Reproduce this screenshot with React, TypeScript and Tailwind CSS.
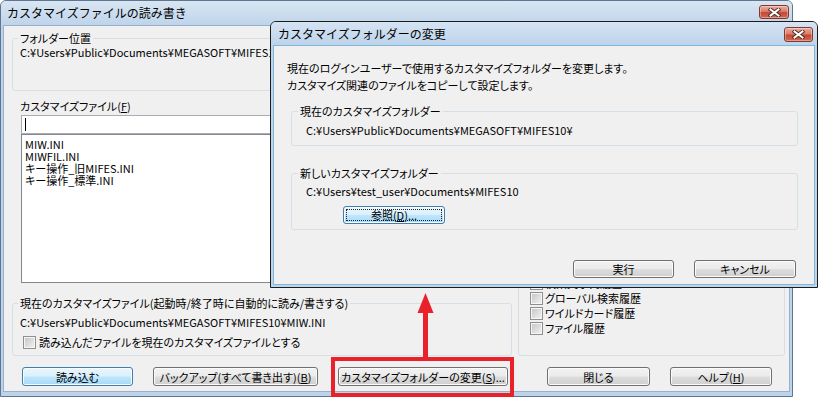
import React from "react";

const GRAY_BTN =
  "border-[#707070] bg-[linear-gradient(to_bottom,#f2f2f2_0%,#ebebeb_48%,#dddddd_52%,#cfcfcf_100%)]";
const BLUE_BTN =
  "border-[#3c7fb1] bg-[linear-gradient(to_bottom,#eaf6fd_0%,#d9f0fc_48%,#bee6fd_52%,#a7d9f5_100%)]";

function CloseButton({ className = "" }: { className?: string }) {
  return (
    <div
      className={`flex items-center justify-center rounded-[3px] border border-[#83382d] bg-[linear-gradient(to_bottom,#eaada0_0%,#d97d6c_45%,#c44733_55%,#cf6a55_100%)] shadow-[inset_0_0_0_1px_rgba(255,255,255,0.35)] ${className}`}
    >
      <svg width="13" height="9" viewBox="0 0 13 9">
        <path d="M2.5 1.5 L10.5 7.5 M10.5 1.5 L2.5 7.5" stroke="#4b2620" strokeWidth="3.8" strokeLinecap="square" />
        <path d="M2.5 1.5 L10.5 7.5 M10.5 1.5 L2.5 7.5" stroke="#ffffff" strokeWidth="2" strokeLinecap="square" />
      </svg>
    </div>
  );
}

function Btn({
  className = "",
  primary = false,
  focus = false,
  children,
}: {
  className?: string;
  primary?: boolean;
  focus?: boolean;
  children: React.ReactNode;
}) {
  return (
    <div
      className={`flex shrink-0 items-center justify-center whitespace-nowrap rounded-[3px] border shadow-[inset_0_0_0_1px_#fbfbfb] ${
        primary ? BLUE_BTN : GRAY_BTN
      } ${className}`}
    >
      {focus ? (
        <div className="m-[2px] flex h-[calc(100%-4px)] w-full items-center justify-center border border-dotted border-[#222]">
          {children}
        </div>
      ) : (
        children
      )}
    </div>
  );
}

function Check() {
  return (
    <span className="inline-block h-[13px] w-[13px] shrink-0 border border-[#8f8f8f] bg-[linear-gradient(135deg,#c4c4c4_0%,#f3f3f3_100%)] shadow-[inset_0_0_0_1px_#f6f6f6]" />
  );
}

function Group({
  label,
  className = "",
  children,
}: {
  label: React.ReactNode;
  className?: string;
  children?: React.ReactNode;
}) {
  return (
    <fieldset className={`rounded-[3px] border border-[#d5dfe5] ${className}`}>
      <legend className="-ml-[2px] whitespace-nowrap px-[2px] leading-[14px]">{label}</legend>
      {children}
    </fieldset>
  );
}

const U = ({ children }: { children: React.ReactNode }) => (
  <span className="underline underline-offset-[1px]">{children}</span>
);

export default function App() {
  return (
    <div className="relative h-[397px] w-[819px] overflow-hidden bg-white font-['Noto_Sans_CJK_JP','Noto_Sans_CJK_SC',sans-serif] text-[11px] leading-[14px] text-black [font-feature-settings:'palt']">
      {/* main window */}
      <div className="flex h-[397px] w-[793px] flex-col rounded-t-[6px] border border-[#5f7590] bg-[#bed3ea]">
        <div className="flex h-[24px] shrink-0 items-start justify-between rounded-t-[5px] bg-[linear-gradient(to_bottom,#d9e6f3,#bfd4ea)]">
          <span className="mt-[5px] pl-[6px] text-[12px] [font-feature-settings:normal]">カスタマイズファイルの読み書き</span>
          <CloseButton className="mr-[3px] mt-[4px] h-[14px] w-[30px]" />
        </div>
        <div className="mx-[2px] mb-[4px] flex flex-1 flex-col border border-[#97b0cc] bg-[#f0f0f0] pt-[5px]">
          <Group label="フォルダー位置" className="ml-[8px] w-[771px] pb-[31px] pl-[7px]">
            <div className="whitespace-nowrap">C:¥Users¥Public¥Documents¥MEGASOFT¥MIFES10¥</div>
          </Group>

          <div className="flex">
            <div className="ml-[8px] flex w-[500px] flex-col">
              <div className="mt-[8px] pl-[8px]">
                カスタマイズファイル(<U>F</U>)
              </div>
              <div className="ml-[9px] mt-[2px] flex h-[19px] w-[484px] items-center border border-[#abadb3] bg-white pl-[3px]">
                <div className="h-[13px] w-[1px] bg-black" />
              </div>
              <div className="ml-[9px] flex h-[149px] w-[484px] flex-col border border-[#828790] bg-white pl-[3px] pt-[3px] leading-[12px]">
                <div>MIW.INI</div>
                <div>MIWFIL.INI</div>
                <div>キー操作_旧MIFES.INI</div>
                <div>キー操作_標準.INI</div>
              </div>
              <Group
                label="現在のカスタマイズファイル(起動時/終了時に自動的に読み/書きする)"
                className="mt-[13px] w-[500px] pb-[6px] pl-[7px]"
              >
                <div className="mt-[5px] whitespace-nowrap">C:¥Users¥Public¥Documents¥MEGASOFT¥MIFES10¥MIW.INI</div>
                <div className="mt-[6px] flex items-center gap-[3px] pl-[3px]">
                  <Check />
                  <span>読み込んだファイルを現在のカスタマイズファイルとする</span>
                </div>
              </Group>
            </div>

            <Group label="履歴" className="ml-[6px] mt-[8px] flex w-[267px] flex-col justify-end pb-[19px] pl-[11px]">
              <div className="mt-auto flex flex-col leading-[15px]">
                <div className="flex h-[15px] items-center gap-[2px]">
                  <Check />
                  <span>検索文字列履歴</span>
                </div>
                <div className="flex h-[15px] items-center gap-[2px]">
                  <Check />
                  <span>グローバル検索履歴</span>
                </div>
                <div className="flex h-[15px] items-center gap-[2px]">
                  <Check />
                  <span>ワイルドカード履歴</span>
                </div>
                <div className="flex h-[15px] items-center gap-[2px]">
                  <Check />
                  <span>ファイル履歴</span>
                </div>
              </div>
            </Group>
          </div>

          <div className="ml-[18px] mt-[11px] flex">
            <Btn primary className="h-[19px] w-[111px]">読み込む</Btn>
            <Btn className="ml-[20px] h-[19px] w-[165px]">
              バックアップ(すべて書き出す)(<U>B</U>)
            </Btn>
            <Btn className="ml-[20px] h-[19px] w-[170px]">
              カスタマイズフォルダーの変更(<U>S</U>)...
            </Btn>
            <Btn className="ml-[39px] h-[19px] w-[103px]">閉じる</Btn>
            <Btn className="ml-[20px] h-[19px] w-[102px]">
              ヘルプ(<U>H</U>)
            </Btn>
          </div>
        </div>
      </div>

      {/* change-folder dialog on top */}
      <div className="absolute left-[270px] top-[21px] flex h-[267px] w-[548px] flex-col rounded-t-[6px] border border-[#1c1c1c] bg-[#bcd4ec]">
        <div className="flex h-[23px] shrink-0 items-start justify-between rounded-t-[5px] bg-[linear-gradient(to_bottom,#d6e4f3,#bdd3ea)]">
          <span className="mt-[5px] pl-[7px] text-[12px] [font-feature-settings:normal]">カスタマイズフォルダーの変更</span>
          <CloseButton className="mr-[4px] mt-[5px] h-[15px] w-[29px]" />
        </div>
        <div className="mx-[2px] mb-[2px] flex flex-1 flex-col border border-[#7fb6dc] bg-[#f0f0f0]">
          <div className="pl-[13px] pt-[14px] leading-[17px]">
            <div>現在のログインユーザーで使用するカスタマイズフォルダーを変更します。</div>
            <div>カスタマイズ関連のファイルをコピーして設定します。</div>
          </div>
          <Group label="現在のカスタマイズフォルダー" className="ml-[17px] mt-[10px] w-[507px] pb-[8px] pl-[8px]">
            <div className="ml-[6px] mt-[5px]">C:¥Users¥Public¥Documents¥MEGASOFT¥MIFES10¥</div>
          </Group>
          <Group label="新しいカスタマイズフォルダー" className="ml-[17px] mt-[20px] w-[507px] pb-[5px] pl-[8px]">
            <div className="ml-[6px] mt-[4px]">C:¥Users¥test_user¥Documents¥MIFES10</div>
            <Btn primary focus className="ml-[43px] mt-[8px] h-[18px] w-[102px]">
              参照(<U>D</U>)...
            </Btn>
          </Group>
          <div className="mt-[30px] flex justify-end gap-[20px] pr-[18px]">
            <Btn className="h-[18px] w-[101px]">実行</Btn>
            <Btn className="h-[18px] w-[102px]">キャンセル</Btn>
          </div>
        </div>
      </div>

      {/* red annotation */}
      <div className="absolute left-[331px] top-[357px] h-[40px] w-[183px] border-[4px] border-[#e8212b]" />
      <svg className="absolute left-[414px] top-[290px]" width="23" height="70" viewBox="0 0 23 70">
        <rect x="9" y="18" width="5" height="52" fill="#e8212b" />
        <polygon points="11.5,3 3.5,23 19.5,23" fill="#e8212b" />
      </svg>
    </div>
  );
}
